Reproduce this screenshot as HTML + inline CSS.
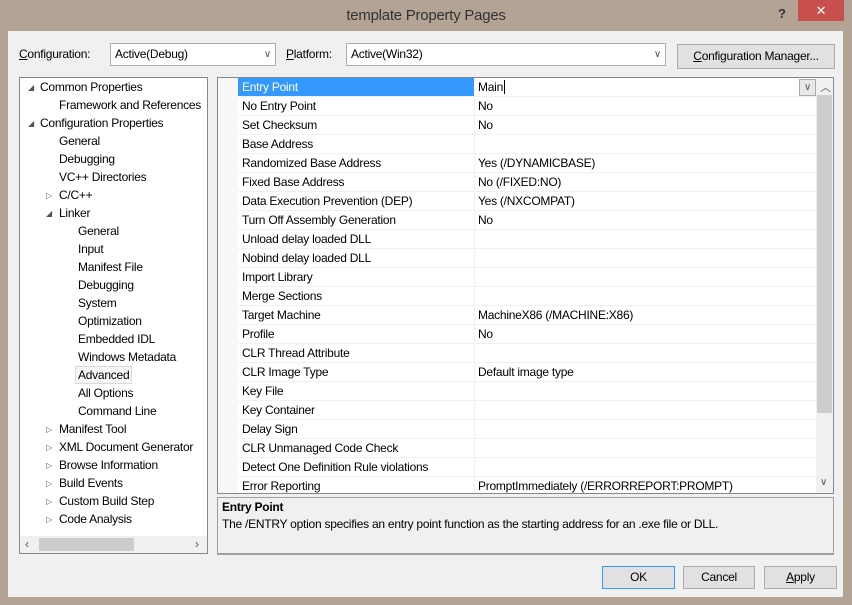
<!DOCTYPE html><html><head><style>
*{margin:0;padding:0;box-sizing:border-box}
body{width:852px;height:605px;background:#b3a394;font-family:"Segoe UI","Liberation Sans",sans-serif;font-size:12px;letter-spacing:-0.25px;color:#000;position:relative;overflow:hidden}
.a{position:absolute}
.title{left:0;top:0;width:852px;height:31px;text-align:center;line-height:31px;font-size:15px;color:#333}
.body{left:8px;top:31px;width:835px;height:566px;background:#f0f0f0}
.combo{background:#fff;border:1px solid #acacac;height:23px;line-height:21px;padding-left:4px}
.combo .ch{position:absolute;right:4px;top:0;color:#555;font-size:10px}
.btn{background:#e1e1e1;border:1px solid #adadad;text-align:center;line-height:21px;height:23px}
.tree{left:19px;top:77px;width:189px;height:477px;background:#fff;border:1px solid #828790}
.ti{position:absolute;height:18px;line-height:18px;white-space:nowrap}
.tri{position:absolute;font-size:8px;color:#555}
.grid{left:217px;top:77px;width:617px;height:417px;background:#fff;border:1px solid #828790;overflow:hidden}
.row{position:absolute;left:20px;width:578px;height:19px;border-bottom:1px solid #f0f0f0;line-height:18px}
.row .k{position:absolute;left:4px;white-space:nowrap}
.row .v{position:absolute;left:240px;white-space:nowrap}
.row .sep{position:absolute;left:236px;top:0;width:1px;height:19px;background:#f0f0f0}
u{text-decoration:underline}
</style></head><body>
<div class="a title">template Property Pages</div>
<div class="a" style="left:778px;top:6px;font-size:13px;font-weight:bold;color:#333">?</div>
<div class="a" style="left:798px;top:0;width:46px;height:21px;background:#c7504c;color:#fff;text-align:center;line-height:21px;font-size:13px">✕</div>
<div class="a body"></div>
<div class="a" style="left:19px;top:47px"><u>C</u>onfiguration:</div>
<div class="a combo" style="left:110px;top:43px;width:166px">Active(Debug)<span class="ch">∨</span></div>
<div class="a" style="left:286px;top:47px"><u>P</u>latform:</div>
<div class="a combo" style="left:346px;top:43px;width:320px">Active(Win32)<span class="ch">∨</span></div>
<div class="a btn" style="left:677px;top:44px;width:158px;height:25px;line-height:23px"><u>C</u>onfiguration Manager...</div>

<div class="a tree">
<div class="tri" style="left:8px;top:5px">◢</div><div class="ti" style="left:20px;top:0">Common Properties</div>
<div class="ti" style="left:39px;top:18px">Framework and References</div>
<div class="tri" style="left:8px;top:41px">◢</div><div class="ti" style="left:20px;top:36px">Configuration Properties</div>
<div class="ti" style="left:39px;top:54px">General</div>
<div class="ti" style="left:39px;top:72px">Debugging</div>
<div class="ti" style="left:39px;top:90px">VC++ Directories</div>
<div class="tri" style="left:26px;top:113px">▷</div><div class="ti" style="left:39px;top:108px">C/C++</div>
<div class="tri" style="left:26px;top:131px">◢</div><div class="ti" style="left:39px;top:126px">Linker</div>
<div class="ti" style="left:58px;top:144px">General</div>
<div class="ti" style="left:58px;top:162px">Input</div>
<div class="ti" style="left:58px;top:180px">Manifest File</div>
<div class="ti" style="left:58px;top:198px">Debugging</div>
<div class="ti" style="left:58px;top:216px">System</div>
<div class="ti" style="left:58px;top:234px">Optimization</div>
<div class="ti" style="left:58px;top:252px">Embedded IDL</div>
<div class="ti" style="left:58px;top:270px">Windows Metadata</div>
<div class="ti" style="left:55px;top:288px;border:1px solid #dadada;background:#f6f6f6;padding:0 2px;height:18px;line-height:16px">Advanced</div>
<div class="ti" style="left:58px;top:306px">All Options</div>
<div class="ti" style="left:58px;top:324px">Command Line</div>
<div class="tri" style="left:26px;top:347px">▷</div><div class="ti" style="left:39px;top:342px">Manifest Tool</div>
<div class="tri" style="left:26px;top:365px">▷</div><div class="ti" style="left:39px;top:360px">XML Document Generator</div>
<div class="tri" style="left:26px;top:383px">▷</div><div class="ti" style="left:39px;top:378px">Browse Information</div>
<div class="tri" style="left:26px;top:401px">▷</div><div class="ti" style="left:39px;top:396px">Build Events</div>
<div class="tri" style="left:26px;top:419px">▷</div><div class="ti" style="left:39px;top:414px">Custom Build Step</div>
<div class="tri" style="left:26px;top:437px">▷</div><div class="ti" style="left:39px;top:432px">Code Analysis</div>
<div class="a" style="left:0;top:458px;width:187px;height:17px;background:#f0f0f0"></div>
<div class="a" style="left:19px;top:460px;width:95px;height:13px;background:#cdcdcd"></div>
<div class="a" style="left:5px;top:459px;color:#555">‹</div>
<div class="a" style="left:175px;top:459px;color:#555">›</div>
</div>

<div class="a grid">
<div class="a" style="left:0;top:0;width:20px;height:417px;background:#f7f7f7"></div>
<div class="row" style="top:0"><div class="a" style="left:0;top:0;width:236px;height:18px;background:#3399ff"></div><span class="k" style="color:#fff">Entry Point</span><span class="v">Main<span style="border-left:1px solid #000;margin-left:1px"></span></span>
<div class="a" style="left:561px;top:1px;width:17px;height:17px;border:1px solid #aaa;background:#e8e8e8;color:#555;font-size:10px;text-align:center;line-height:15px">∨</div></div>
<div class="row" style="top:19px"><span class="sep"></span><span class="k">No Entry Point</span><span class="v">No</span></div>
<div class="row" style="top:38px"><span class="sep"></span><span class="k">Set Checksum</span><span class="v">No</span></div>
<div class="row" style="top:57px"><span class="sep"></span><span class="k">Base Address</span><span class="v"></span></div>
<div class="row" style="top:76px"><span class="sep"></span><span class="k">Randomized Base Address</span><span class="v">Yes (/DYNAMICBASE)</span></div>
<div class="row" style="top:95px"><span class="sep"></span><span class="k">Fixed Base Address</span><span class="v">No (/FIXED:NO)</span></div>
<div class="row" style="top:114px"><span class="sep"></span><span class="k">Data Execution Prevention (DEP)</span><span class="v">Yes (/NXCOMPAT)</span></div>
<div class="row" style="top:133px"><span class="sep"></span><span class="k">Turn Off Assembly Generation</span><span class="v">No</span></div>
<div class="row" style="top:152px"><span class="sep"></span><span class="k">Unload delay loaded DLL</span><span class="v"></span></div>
<div class="row" style="top:171px"><span class="sep"></span><span class="k">Nobind delay loaded DLL</span><span class="v"></span></div>
<div class="row" style="top:190px"><span class="sep"></span><span class="k">Import Library</span><span class="v"></span></div>
<div class="row" style="top:209px"><span class="sep"></span><span class="k">Merge Sections</span><span class="v"></span></div>
<div class="row" style="top:228px"><span class="sep"></span><span class="k">Target Machine</span><span class="v">MachineX86 (/MACHINE:X86)</span></div>
<div class="row" style="top:247px"><span class="sep"></span><span class="k">Profile</span><span class="v">No</span></div>
<div class="row" style="top:266px"><span class="sep"></span><span class="k">CLR Thread Attribute</span><span class="v"></span></div>
<div class="row" style="top:285px"><span class="sep"></span><span class="k">CLR Image Type</span><span class="v">Default image type</span></div>
<div class="row" style="top:304px"><span class="sep"></span><span class="k">Key File</span><span class="v"></span></div>
<div class="row" style="top:323px"><span class="sep"></span><span class="k">Key Container</span><span class="v"></span></div>
<div class="row" style="top:342px"><span class="sep"></span><span class="k">Delay Sign</span><span class="v"></span></div>
<div class="row" style="top:361px"><span class="sep"></span><span class="k">CLR Unmanaged Code Check</span><span class="v"></span></div>
<div class="row" style="top:380px"><span class="sep"></span><span class="k">Detect One Definition Rule violations</span><span class="v"></span></div>
<div class="row" style="top:399px"><span class="sep"></span><span class="k">Error Reporting</span><span class="v">PromptImmediately (/ERRORREPORT:PROMPT)</span></div>
<div class="a" style="left:598px;top:0;width:17px;height:417px;background:#f0f0f0"></div>
<div class="a" style="left:599px;top:17px;width:15px;height:318px;background:#cdcdcd"></div>
<div class="a" style="left:602px;top:1px;color:#555;font-size:11px">︿</div>
<div class="a" style="left:602px;top:399px;color:#555;font-size:10px">∨</div>
</div>

<div class="a" style="left:217px;top:497px;width:617px;height:58px;background:#f0f0f0;border:1px solid #a0a0a0;border-bottom:2px solid #a0a0a0"></div>
<div class="a" style="left:222px;top:500px;font-weight:bold">Entry Point</div>
<div class="a" style="left:222px;top:517px">The /ENTRY option specifies an entry point function as the starting address for an .exe file or DLL.</div>

<div class="a btn" style="left:602px;top:566px;width:73px;border-color:#3399ff">OK</div>
<div class="a btn" style="left:683px;top:566px;width:72px">Cancel</div>
<div class="a btn" style="left:764px;top:566px;width:73px"><u>A</u>pply</div>
</body></html>
